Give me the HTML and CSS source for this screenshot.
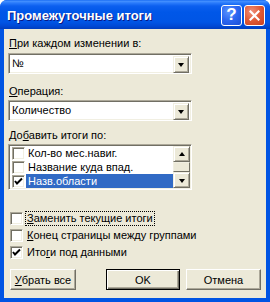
FILE: index.html
```html
<!DOCTYPE html>
<html>
<head>
<meta charset="utf-8">
<link rel="stylesheet" href="styles.css">
</head>
<body>
<div class="window">
  <div class="titlebar">
    <span class="title">Промежуточные итоги</span>
    <div class="tbtns">
      <div class="tbtn help">?</div>
      <div class="tbtn close">
        <svg width="11" height="11" viewBox="0 0 11 11"><path d="M1.5 1.5 L9.5 9.5 M9.5 1.5 L1.5 9.5" stroke="#fff" stroke-width="2.2" stroke-linecap="square"/></svg>
      </div>
    </div>
  </div>
  <div class="client">
    <div class="label l1"><u>П</u>ри каждом изменении в:</div>
    <div class="combo">
      <div class="combo-text">№</div>
      <div class="dropbtn"><span class="tri"></span></div>
    </div>
    <div class="label l2"><u>О</u>перация:</div>
    <div class="combo">
      <div class="combo-text">Количество</div>
      <div class="dropbtn"><span class="tri"></span></div>
    </div>
    <div class="label l3">До<u>б</u>авить итоги по:</div>
    <div class="listbox">
      <div class="rows">
        <div class="row"><span class="cb"></span><span class="rtext">Кол-во мес.навиг.</span></div>
        <div class="row"><span class="cb"></span><span class="rtext">Название куда впад.</span></div>
        <div class="row sel"><span class="cb"><svg width="9" height="9" viewBox="0 0 9 9"><path d="M1 4 L3 6.5 L8 1.5" stroke="#000" stroke-width="2" fill="none"/></svg></span><span class="rtext">Назв.области</span></div>
      </div>
      <div class="vscroll">
        <div class="sbtn"><span class="tri up"></span></div>
        <div class="strack"><div class="thumb"></div></div>
        <div class="sbtn"><span class="tri"></span></div>
      </div>
    </div>
    <div class="checks">
      <div class="chk"><span class="cb"></span><span class="ctext focus"><u>З</u>аменить текущие итоги</span></div>
      <div class="chk"><span class="cb"></span><span class="ctext"><u>К</u>онец страницы между группами</span></div>
      <div class="chk"><span class="cb"><svg width="9" height="9" viewBox="0 0 9 9"><path d="M1 4 L3 6.5 L8 1.5" stroke="#000" stroke-width="2" fill="none"/></svg></span><span class="ctext">Ито<u>г</u>и под данными</span></div>
    </div>
    <div class="buttons">
      <div class="btn b1"><u>У</u>брать все</div>
      <div class="btn b2 def">OK</div>
      <div class="btn b3">Отмена</div>
    </div>
  </div>
</div>
</body>
</html>
```
FILE: styles.css
```css
html, body { margin: 0; padding: 0; background: #fff; }
body { width: 270px; height: 302px; overflow: hidden; }
.window {
  width: 270px; height: 302px;
  display: flex; flex-direction: column;
  background: #0054E3;
  border-radius: 7px 7px 0 0;
  overflow: hidden;
}
.titlebar {
  height: 29px; flex: none;
  display: flex; align-items: center; justify-content: space-between;
  background: linear-gradient(to bottom, #0A5FEF 0, #4893FF 1px, #2A7BFB 3px, #0C5FEF 6px, #0057E8 12px, #0055E5 22px, #0049D5 26px, #003DBD 29px);
  padding: 0 5px 0 7px;
}
.title {
  color: #fff; font-family: "Liberation Sans", Arial, sans-serif; font-weight: bold; font-size: 13px;
  text-shadow: 1px 1px 0 #0A1883;
  margin-top: 1px;
}
.tbtns { display: flex; gap: 2px; margin-top: 1px; }
.tbtn {
  width: 19px; height: 19px; border: 1px solid #fff; border-radius: 3px;
  display: flex; align-items: center; justify-content: center;
  color: #fff; font-family: "Liberation Sans", Arial, sans-serif; font-weight: bold; font-size: 17px;
}
.help { background: radial-gradient(circle at 35% 30%, #5A95FF 0, #2B66F0 50%, #1A4FD6 100%); }
.close { background: radial-gradient(circle at 35% 30%, #F0907A 0, #E05A36 50%, #C8401E 100%); }
.client {
  flex: 1;
  background: #ECE9D8;
  margin: 0 4px 4px 4px;
  display: flex; flex-direction: column;
  font-family: "Liberation Sans", Arial, sans-serif; font-size: 11px; color: #000;
}
.label { height: 13px; line-height: 13px; padding-left: 5px; }
.l1 { margin-top: 8px; margin-bottom: 3px; }
.l2 { margin-top: 11px; margin-bottom: 2px; }
.l3 { margin-top: 8px; margin-bottom: 2px; }
.combo {
  margin-left: 4px; width: 184px; height: 21px; box-sizing: border-box;
  border: 1px solid; border-color: #ACA899 #fff #fff #ACA899;
  box-shadow: inset 1px 1px 0 #716F64, inset -1px -1px 0 #F1EFE2;
  background: #fff;
  display: flex; padding: 2px;
}
.combo-text { flex: 1; line-height: 15px; padding-left: 1px; }
.dropbtn, .sbtn {
  width: 16px; height: 17px; box-sizing: border-box;
  background: #ECE9D8;
  border: 1px solid; border-color: #F1EFE2 #716F64 #716F64 #F1EFE2;
  box-shadow: inset 1px 1px 0 #fff, inset -1px -1px 0 #ACA899;
  display: flex; align-items: center; justify-content: center;
}
.tri { width: 0; height: 0; border-left: 3.5px solid transparent; border-right: 3.5px solid transparent; border-top: 4px solid #000; margin-top: 1px; }
.tri.up { border-top: 0; border-bottom: 4px solid #000; margin-top: -1px; }
.listbox {
  margin-left: 4px; width: 184px; height: 46px; box-sizing: border-box;
  border: 1px solid; border-color: #ACA899 #fff #fff #ACA899;
  box-shadow: inset 1px 1px 0 #716F64, inset -1px -1px 0 #F1EFE2;
  background: #fff; padding: 1px;
  display: flex;
}
.rows { flex: 1; display: flex; flex-direction: column; }
.row { height: 14px; display: flex; align-items: center; }
.row .cb { margin-left: 2px; }
.rtext { flex: 1; height: 14px; line-height: 14px; padding-left: 2px; margin-left: 1px; }
.row.sel .rtext { background: #316AC5; color: #fff; }
.vscroll { width: 17px; display: flex; flex-direction: column; }
.vscroll .sbtn { width: 17px; height: 16px; }
.strack { flex: 1; background: #F5F4EF; display: flex; }
.thumb { flex: 1; box-sizing: border-box; background: #ECE9D8; border: 1px solid; border-color: #F1EFE2 #716F64 #716F64 #F1EFE2; }
.cb {
  width: 13px; height: 13px; box-sizing: border-box; flex: none;
  border: 1px solid; border-color: #ACA899 #fff #fff #ACA899;
  box-shadow: inset 1px 1px 0 #716F64, inset -1px -1px 0 #F1EFE2;
  background: #fff;
  display: flex; align-items: center; justify-content: center;
}
.checks { margin-top: 20px; display: flex; flex-direction: column; }
.chk { height: 17px; display: flex; align-items: center; padding-left: 6px; }
.ctext { margin-left: 3px; padding: 0 1px; line-height: 13px; }
.focus { outline: 1px dotted #000; }
.buttons { margin-top: 8px; display: flex; padding-left: 6px; }
.btn {
  height: 21px; box-sizing: border-box;
  border: 1px solid; border-color: #fff #716F64 #716F64 #fff;
  box-shadow: inset -1px -1px 0 #ACA899;
  background: #ECE9D8;
  display: flex; align-items: center; justify-content: center;
}
.b1 { width: 66px; }
.b2 { width: 74px; margin-left: 30px; }
.b3 { width: 75px; margin-left: 6px; }
.btn.def { border: 1px solid #000; box-shadow: inset 1px 1px 0 #fff, inset -1px -1px 0 #716F64, inset -2px -2px 0 #ACA899; }
```
